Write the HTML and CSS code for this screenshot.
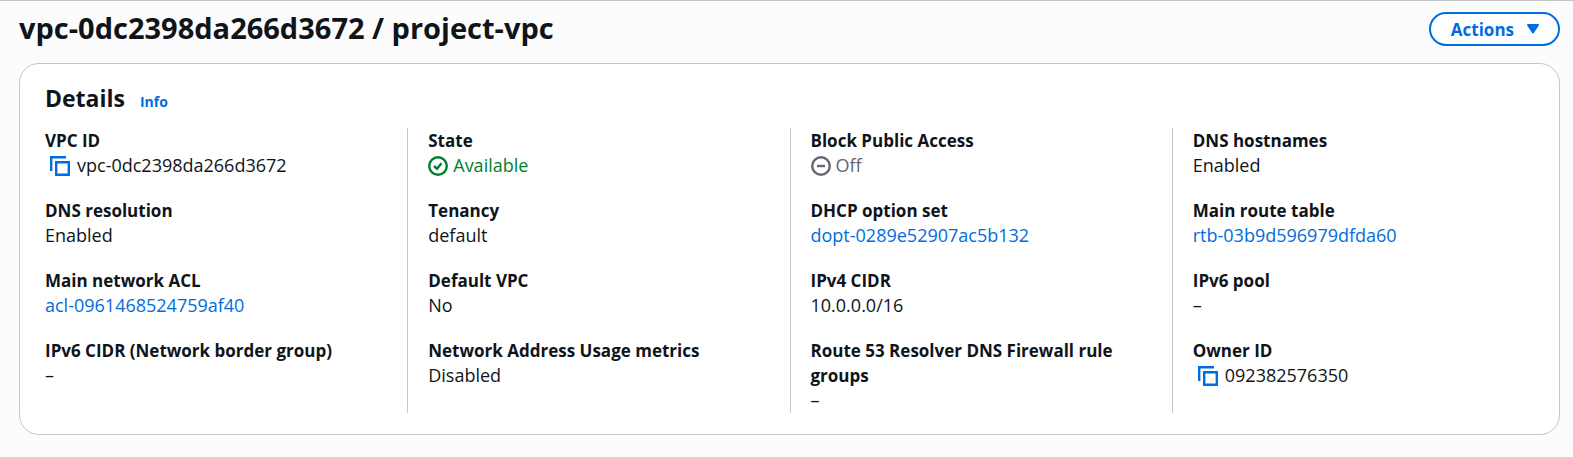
FILE: index.html
```
<!DOCTYPE html>
<html lang="en">
<head>
<meta charset="utf-8">
<title>VPC details</title>
<link rel="stylesheet" href="styles.css">
</head>
<body>
<svg class="sprite" aria-hidden="true">
  <symbol id="copy" viewBox="0 0 20 20"><path d="M6.2 6.2h12.6v12.6H6.2z M1.2 15V1.2H16"/></symbol>
</svg>
<main class="page">
  <header class="page-header">
    <h1>vpc-0dc2398da266d3672 / project-vpc</h1>
    <button class="actions" type="button">Actions
      <svg class="caret" viewBox="0 0 14 12" aria-hidden="true"><path d="M2 2h10L7 9.500z"/></svg>
    </button>
  </header>
  <section class="panel">
    <div class="panel-header"><h2>Details</h2><a class="info" href="#info">Info</a></div>
    <dl class="grid">
      <div class="item"><dt>VPC ID</dt><dd class="copyable"><button class="copy" type="button" aria-label="Copy VPC ID"><svg viewBox="0 0 20 20"><use href="#copy"/></svg></button>vpc-0dc2398da266d3672</dd></div>
      <div class="item"><dt>State</dt><dd class="status ok"><svg viewBox="0 0 20 20" aria-hidden="true"><circle cx="10" cy="10" r="8.8"/><path d="M6 10l3 2.800 4.500-5.600"/></svg>Available</dd></div>
      <div class="item"><dt>Block Public Access</dt><dd class="status off"><svg viewBox="0 0 20 20" aria-hidden="true"><circle cx="10" cy="10" r="8.8"/><path d="M6 10h8"/></svg>Off</dd></div>
      <div class="item"><dt>DNS hostnames</dt><dd>Enabled</dd></div>
      <div class="item"><dt>DNS resolution</dt><dd>Enabled</dd></div>
      <div class="item"><dt>Tenancy</dt><dd>default</dd></div>
      <div class="item"><dt>DHCP option set</dt><dd><a href="#dopt">dopt-0289e52907ac5b132</a></dd></div>
      <div class="item"><dt>Main route table</dt><dd><a href="#rtb">rtb-03b9d596979dfda60</a></dd></div>
      <div class="item"><dt>Main network ACL</dt><dd><a href="#acl">acl-0961468524759af40</a></dd></div>
      <div class="item"><dt>Default VPC</dt><dd>No</dd></div>
      <div class="item"><dt>IPv4 CIDR</dt><dd>10.0.0.0/16</dd></div>
      <div class="item"><dt>IPv6 pool</dt><dd>–</dd></div>
      <div class="item"><dt>IPv6 CIDR (Network border group)</dt><dd>–</dd></div>
      <div class="item"><dt>Network Address Usage metrics</dt><dd>Disabled</dd></div>
      <div class="item"><dt>Route 53 Resolver DNS Firewall rule groups</dt><dd>–</dd></div>
      <div class="item"><dt>Owner ID</dt><dd class="copyable"><button class="copy" type="button" aria-label="Copy owner ID"><svg viewBox="0 0 20 20"><use href="#copy"/></svg></button>092382576350</dd></div>
    </dl>
  </section>
</main>
</body>
</html>
```

FILE: styles.css
```
* { box-sizing: border-box; }
body {
  margin: 0;
  min-height: 100vh;
  background: #fcfcfd;
  border-top: 1px solid #c6c6cd;
  color: #0f141a;
  font: 18px/25px "Open Sans", "Noto Sans", sans-serif;
}
h1, h2, dl, dd { margin: 0; }
a { color: #006ce0; text-decoration: none; }
.sprite { position: absolute; width: 0; height: 0; }
.page { padding: 11px 13px 0 19px; }
.page-header { display: flex; justify-content: space-between; align-items: flex-start; margin-bottom: 17px; }
h1 { font-size: 29px; line-height: 32px; font-weight: 700; }
.actions {
  display: flex; align-items: center; gap: 12px;
  height: 34px; padding: 0 18px 0 20px;
  border: 2px solid #006ce0; border-radius: 17px;
  background: #fff; color: #006ce0;
  font: 700 17px/25px "Open Sans", "Noto Sans", sans-serif;
}
.caret { width: 14px; height: 12px; fill: currentColor; stroke: currentColor; stroke-width: 2; stroke-linejoin: round; }
.panel { background: #fff; border: 1px solid #c6c6cd; border-radius: 20px; padding: 19px 25px 21px; }
.panel-header { display: flex; align-items: baseline; gap: 15px; margin-bottom: 15px; }
h2 { font-size: 23px; line-height: 30px; font-weight: 700; }
.info { font-size: 14px; line-height: 20px; font-weight: 700; }
.grid { display: grid; grid-template-columns: repeat(4, minmax(0, 1fr)); margin: 0 -20px; }
.item { padding: 0 20px 20px; }
.item:not(:nth-child(4n+1)) { border-left: 1px solid #c6c6cd; }
.item:nth-last-child(-n+4) { padding-bottom: 0; }
dt { font-size: 17px; font-weight: 700; }
.status, .copyable { display: flex; align-items: center; }
.status { gap: 5px; }
.status svg, .copy svg { display: block; width: 20px; height: 20px; fill: none; stroke: currentColor; stroke-width: 2.4; }
.ok { color: #00802f; }
.off { color: #656871; }
.copy { padding: 0; margin: 0 7px 0 5px; border: 0; background: none; color: #006ce0; }
```
